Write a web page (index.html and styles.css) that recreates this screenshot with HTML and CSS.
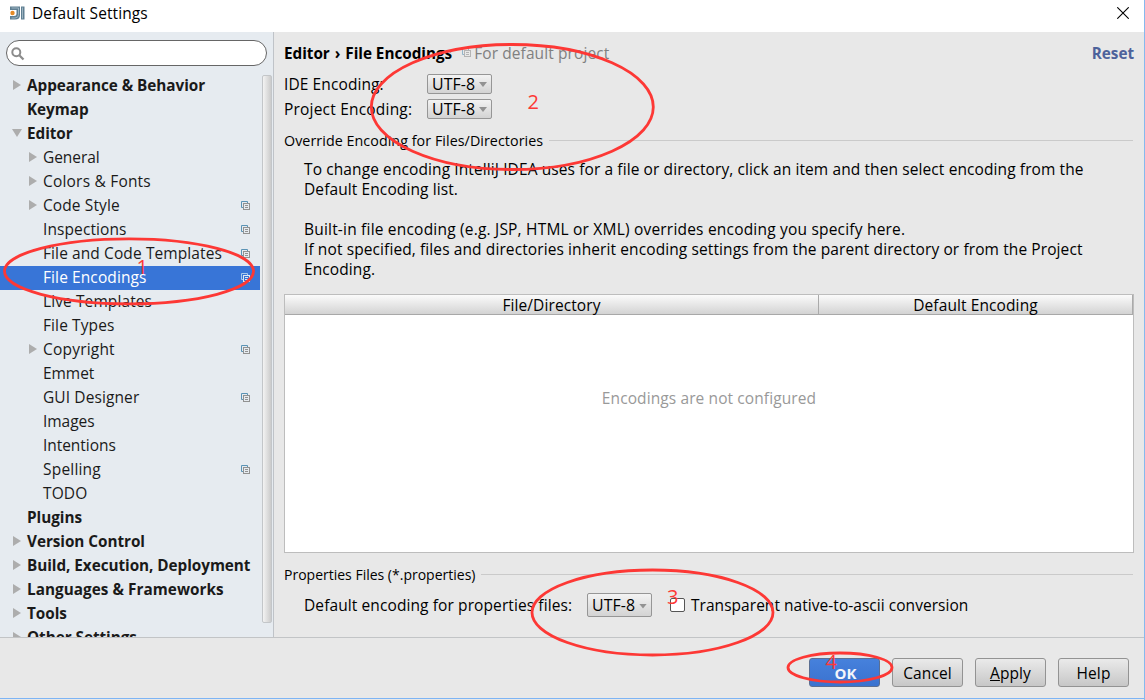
FILE: index.html
```html
<!DOCTYPE html>
<html lang="en">
<head>
<meta charset="utf-8">
<title>Default Settings</title>
<link rel="stylesheet" href="styles.css">
</head>
<body>
<svg class="defs" width="0" height="0">
  <symbol id="copy" viewBox="0 0 9 9"><path class="back" d="M2 6.500H.5V.5H6.500V2"/><rect class="front" x="2.500" y="2.500" width="6" height="6"/><path class="front" d="M4 4.500H7M4 6.500H7"/></symbol>
</svg>
<div class="window">
  <header class="titlebar">
    <svg class="logo" width="15" height="14" viewBox="0 0 15 14"><path d="M0 .5H10V9Q10 13.500 5 13.500H0V10H4Q6.500 10 6.500 7.500V4H0Z" fill="#5f7f92"/><path d="M1.500 2H8.500V8.500Q8.500 12 5 12H1.500" fill="none" stroke="#9db4c1"/><rect x="11" y=".5" width="3.500" height="13" fill="#5f7f92"/><path d="M12.500 1.500V12.500" stroke="#9db4c1"/><circle cx="2.500" cy="7" r="2.200" fill="#e58a25"/></svg>
    <span class="title">Default Settings</span>
    <svg class="close" width="12" height="12" viewBox="0 0 12 12"><path d="M.3.3 11.700 11.700M11.700.3.3 11.700" stroke="#000" stroke-width="1.100"/></svg>
  </header>
  <div class="body">
    <aside class="sidebar">
      <div class="search"><svg width="14" height="14" viewBox="0 0 14 14"><circle cx="5.300" cy="5.300" r="4" fill="none" stroke="#8c8c8c" stroke-width="2"/><path d="M8.300 8.300 12.500 12.500" stroke="#8c8c8c" stroke-width="2.300"/></svg></div>
      <div class="treewrap">
        <ul class="tree">
          <li class="top"><i class="arrow"></i><span>Appearance &amp; Behavior</span></li>
          <li class="top"><span>Keymap</span></li>
          <li class="top"><i class="arrow open"></i><span>Editor</span></li>
          <li><i class="arrow"></i><span class="tight">General</span></li>
          <li><i class="arrow"></i><span class="loose">Colors &amp; Fonts</span></li>
          <li><i class="arrow"></i><span>Code Style</span><svg class="copy"><use href="#copy"/></svg></li>
          <li><span>Inspections</span><svg class="copy"><use href="#copy"/></svg></li>
          <li><span>File and Code Templates</span><svg class="copy"><use href="#copy"/></svg></li>
          <li class="selected"><span>File Encodings</span><svg class="copy"><use href="#copy"/></svg></li>
          <li><span>Live Templates</span></li>
          <li><span>File Types</span></li>
          <li><i class="arrow"></i><span class="loose">Copyright</span><svg class="copy"><use href="#copy"/></svg></li>
          <li><span class="tight">Emmet</span></li>
          <li><span>GUI Designer</span><svg class="copy"><use href="#copy"/></svg></li>
          <li><span class="tight">Images</span></li>
          <li><span class="tight">Intentions</span></li>
          <li><span class="loose">Spelling</span><svg class="copy"><use href="#copy"/></svg></li>
          <li><span>TODO</span></li>
          <li class="top"><span>Plugins</span></li>
          <li class="top"><i class="arrow"></i><span>Version Control</span></li>
          <li class="top"><i class="arrow"></i><span>Build, Execution, Deployment</span></li>
          <li class="top"><i class="arrow"></i><span class="even">Languages &amp; Frameworks</span></li>
          <li class="top"><i class="arrow"></i><span>Tools</span></li>
          <li class="top"><i class="arrow"></i><span>Other Settings</span></li>
        </ul>
        <div class="scrollbar"></div>
      </div>
    </aside>
    <main class="content">
      <div class="crumbs"><b>Editor</b><b class="sep">›</b><b>File Encodings</b><svg class="copy"><use href="#copy"/></svg><span class="scope">For default project</span><b class="reset">Reset</b></div>
      <div class="field"><label>IDE Encoding:</label><div class="combo"><span>UTF-8</span><i></i></div></div>
      <div class="field"><label class="loose">Project Encoding:</label><div class="combo"><span>UTF-8</span><i></i></div></div>
      <div class="section first"><span>Override Encoding for Files/Directories</span><hr></div>
      <div class="info">
        <p>To change encoding IntelliJ IDEA uses for a file or directory, click an item and then select encoding from the</p>
        <p>Default Encoding list.</p>
        <p class="gap loose">Built-in file encoding (e.g. JSP, HTML or XML) overrides encoding you specify here.</p>
        <p>If not specified, files and directories inherit encoding settings from the parent directory or from the Project</p>
        <p>Encoding.</p>
      </div>
      <div class="table">
        <div class="thead"><div class="th wide">File/Directory</div><div class="th">Default Encoding</div></div>
        <div class="empty">Encodings are not configured</div>
      </div>
      <div class="section second"><span>Properties Files (*.properties)</span><hr></div>
      <div class="props"><label>Default encoding for properties files:</label><div class="combo"><span>UTF-8</span><i></i></div><div class="check"></div><span class="even">Transparent native-to-ascii conversion</span></div>
    </main>
  </div>
  <footer class="footer">
    <div class="btn primary">OK</div>
    <div class="btn">Cancel</div>
    <div class="btn"><span><u>A</u>pply</span></div>
    <div class="btn">Help</div>
  </footer>
  <svg class="marks" width="1145" height="700" viewBox="0 0 1145 700">
    <ellipse cx="129" cy="271.300" rx="124.500" ry="32.500"/>
    <ellipse cx="512.300" cy="107" rx="141" ry="62.500"/>
    <ellipse cx="652.500" cy="612.500" rx="120.500" ry="42.500"/>
    <ellipse cx="840" cy="667.500" rx="52" ry="14.500"/>
    <text x="136.500" y="274">1</text>
    <text x="527.500" y="109">2</text>
    <text x="667" y="604">3</text>
    <text x="825.500" y="669">4</text>
  </svg>
</div>
</body>
</html>
```
FILE: styles.css
```css
* { box-sizing: border-box; }
body { margin: 0; font-family: "Open Sans", "Noto Sans", sans-serif; font-size: 15.5px; letter-spacing: 0.1px; line-height: 20px; color: #000; }
b { font-size: 15.3px; letter-spacing: -0.04px; }
p, ul { margin: 0; padding: 0; }
.defs { position: absolute; }
.window { position: relative; width: 1145px; height: 700px; overflow: hidden; display: flex; flex-direction: column; background: #e8e8e8; border-right: 1px solid #86b9ee; }
.titlebar { height: 32px; flex: none; background: #fff; display: flex; align-items: center; padding: 0 15px 6px 10px; }
.title { margin-left: 7px; white-space: nowrap; }
.close { margin-left: auto; }
.body { height: 606px; flex: none; display: flex; border-bottom: 1px solid #c2c4c6; }
.sidebar { width: 274px; flex: none; background: #e6ebf0; border-right: 1px solid #bfc3c8; padding-top: 8px; overflow: hidden; }
.search { width: 261px; height: 26px; margin-left: 6px; border: 1px solid #666; border-radius: 13px; background: #fff; padding: 6px 4px; display: flex; }
.treewrap { display: flex; margin-top: 8px; }
.tree { list-style: none; width: 260px; height: 563px; overflow: hidden; color: #1a1a1a; flex: none; }
.tree li { height: 24px; display: flex; align-items: center; padding: 0 0 2px 43px; white-space: nowrap; }
.tree li.top { padding-left: 27px; font-weight: 700; font-size: 15.3px; letter-spacing: -0.05px; }
.loose { letter-spacing: 0.2px; }
.even { letter-spacing: 0.04px; }
.tight { letter-spacing: -0.05px; }
.tree li.selected { background: #3875d7; color: #fff; }
.arrow { width: 8px; height: 10px; background: #adadad; clip-path: polygon(0 0, 100% 50%, 0 100%); margin-left: -14px; margin-right: 6px; flex: none; }
.arrow.open { width: 10px; height: 8px; clip-path: polygon(0 0, 100% 0, 50% 100%); margin-left: -15px; margin-right: 5px; }
.copy { width: 9px; height: 9px; flex: none; fill: none; --back: #5b93b5; --front: #929292; }
.tree .copy { margin: 1px 10px 0 auto; }
.selected .copy { --back: #a9c9ec; --front: #dfe7f2; }
.back { stroke: var(--back); }
.front { stroke: var(--front); }
.scrollbar { width: 10px; height: 548px; margin: 1px 0 0 2px; border: 1px solid #c3c6c9; border-radius: 2px; background: linear-gradient(90deg, #f3f3f3, #cbcbcb); }
.content { width: 870px; padding: 10px 10px 0 10px; white-space: nowrap; }
.crumbs { display: flex; align-items: center; height: 21px; }
.sep { margin: 0 5px; }
.crumbs .copy { margin: 0 3px 0 10px; opacity: .6; }
.scope { color: #808080; }
.reset { margin-left: auto; color: #4d629b; }
.field { display: flex; align-items: center; height: 25px; }
.crumbs + .field { margin-top: 8px; }
.field label { width: 143px; }
.combo { width: 65px; height: 20px; border: 1px solid #969696; border-radius: 2px; background: linear-gradient(#f3f3f3, #d3d3d3); display: flex; align-items: center; padding: 0 4px; justify-content: space-between; flex: none; }
.combo span { font-size: 15.9px; }
.combo i { width: 8px; height: 5px; margin-top: 2px; background: #929292; clip-path: polygon(0 0, 100% 0, 50% 100%); }
.section { display: flex; align-items: center; height: 20px; font-size: 14.3px; letter-spacing: 0.05px; }
.section hr { flex: 1; border: 0; height: 1px; background: #cacaca; margin: 0 1px 2px 6px; }
.section.first { margin-top: 10px; }
.info { padding: 8px 0 0 20px; }
.gap { margin-top: 20px; }
.table { width: 850px; height: 259px; margin-top: 15px; border: 1px solid #bdbdbd; background: #fff; }
.thead { display: flex; height: 20px; background: linear-gradient(#fbfbfb, #d3d3d3); border-bottom: 1px solid #a8a8a8; border-right: 1px solid #aaa; }
.th { flex: 1; display: flex; justify-content: center; align-items: center; }
.wide { flex: none; width: 534px; border-right: 1px solid #aaa; }
.empty { margin-top: 73px; text-align: center; color: #999; }
.section.second { margin-top: 12px; font-size: 14px; letter-spacing: 0; }
.props { display: flex; align-items: center; height: 24px; margin: 8px 0 0 20px; }
.props label { width: 283px; }
.props .combo { height: 24px; }
.check { width: 15px; height: 14px; border: 1px solid #555; border-radius: 2px; background: #fff; margin: 0 6px 0 18px; }
.footer { height: 61px; flex: none; border-bottom: 1px solid #7db4f5; display: flex; justify-content: flex-end; gap: 12px; padding: 20px 15px 0 0; }
.btn { width: 71px; height: 29px; border: 1px solid #939393; border-radius: 3px; background: linear-gradient(#eaeaea, #c7c7c7); display: flex; align-items: center; justify-content: center; }
.primary { background: linear-gradient(#4681dc, #3a72cf); border-color: #5b6f92; color: #f2f5fa; font-weight: 700; font-size: 15px; padding-left: 2px; }
.marks { position: absolute; left: 0; top: 0; }
.marks ellipse { fill: none; stroke: #fd3835; stroke-width: 2.8px; }
.marks text { fill: #fd3835; font-size: 20px; letter-spacing: 0; }
```
